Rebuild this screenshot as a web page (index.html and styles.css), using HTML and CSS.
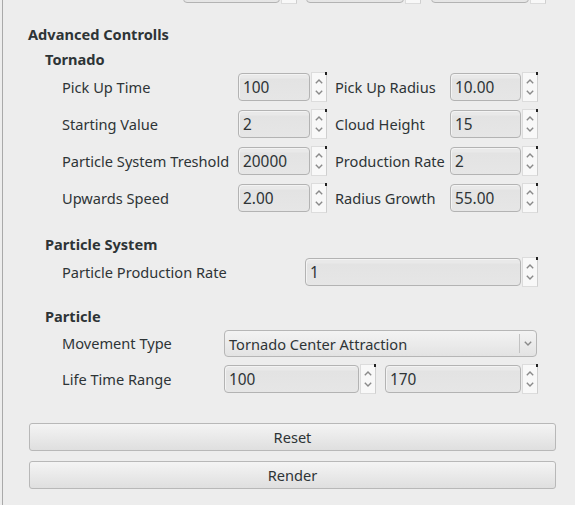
FILE: index.html
```html
<!DOCTYPE html>
<html>
<head>
<meta charset="utf-8">
<link rel="stylesheet" href="styles.css">
</head>
<body>
<div class="panel">
  <div class="toprow">
    <div class="spin w114"><div class="field"></div><div class="btns"><span class="up"></span><span class="dn"></span></div></div>
    <div class="spin w115"><div class="field"></div><div class="btns"><span class="up"></span><span class="dn"></span></div></div>
    <div class="spin w115"><div class="field"></div><div class="btns"><span class="up"></span><span class="dn"></span></div></div>
  </div>

  <div class="h1">Advanced Controlls</div>

  <div class="h2">Tornado</div>
  <div class="tgrid">
    <div class="lbl">Pick Up Time</div>
    <div class="spin"><div class="field">100</div><div class="btns"><svg class="chev" viewBox="0 0 8 5"><polyline points="0.8,4.2 4,1 7.2,4.2"/></svg><svg class="chev" viewBox="0 0 8 5"><polyline points="0.8,0.8 4,4 7.2,0.8"/></svg></div></div>
    <div class="lbl lb2">Pick Up Radius</div>
    <div class="spin"><div class="field">10.00</div><div class="btns"><svg class="chev" viewBox="0 0 8 5"><polyline points="0.8,4.2 4,1 7.2,4.2"/></svg><svg class="chev" viewBox="0 0 8 5"><polyline points="0.8,0.8 4,4 7.2,0.8"/></svg></div></div>

    <div class="lbl">Starting Value</div>
    <div class="spin"><div class="field">2</div><div class="btns"><svg class="chev" viewBox="0 0 8 5"><polyline points="0.8,4.2 4,1 7.2,4.2"/></svg><svg class="chev" viewBox="0 0 8 5"><polyline points="0.8,0.8 4,4 7.2,0.8"/></svg></div></div>
    <div class="lbl lb2">Cloud Height</div>
    <div class="spin"><div class="field">15</div><div class="btns"><svg class="chev" viewBox="0 0 8 5"><polyline points="0.8,4.2 4,1 7.2,4.2"/></svg><svg class="chev" viewBox="0 0 8 5"><polyline points="0.8,0.8 4,4 7.2,0.8"/></svg></div></div>

    <div class="lbl">Particle System Treshold</div>
    <div class="spin"><div class="field">20000</div><div class="btns"><svg class="chev" viewBox="0 0 8 5"><polyline points="0.8,4.2 4,1 7.2,4.2"/></svg><svg class="chev" viewBox="0 0 8 5"><polyline points="0.8,0.8 4,4 7.2,0.8"/></svg></div></div>
    <div class="lbl lb2">Production Rate</div>
    <div class="spin"><div class="field">2</div><div class="btns"><svg class="chev" viewBox="0 0 8 5"><polyline points="0.8,4.2 4,1 7.2,4.2"/></svg><svg class="chev" viewBox="0 0 8 5"><polyline points="0.8,0.8 4,4 7.2,0.8"/></svg></div></div>

    <div class="lbl">Upwards Speed</div>
    <div class="spin"><div class="field">2.00</div><div class="btns"><svg class="chev" viewBox="0 0 8 5"><polyline points="0.8,4.2 4,1 7.2,4.2"/></svg><svg class="chev" viewBox="0 0 8 5"><polyline points="0.8,0.8 4,4 7.2,0.8"/></svg></div></div>
    <div class="lbl lb2">Radius Growth</div>
    <div class="spin"><div class="field">55.00</div><div class="btns"><svg class="chev" viewBox="0 0 8 5"><polyline points="0.8,4.2 4,1 7.2,4.2"/></svg><svg class="chev" viewBox="0 0 8 5"><polyline points="0.8,0.8 4,4 7.2,0.8"/></svg></div></div>
  </div>

  <div class="h2 sec2">Particle System</div>
  <div class="psgrid">
    <div class="lbl">Particle Production Rate</div>
    <div class="spin"><div class="field">1</div><div class="btns"><svg class="chev" viewBox="0 0 8 5"><polyline points="0.8,4.2 4,1 7.2,4.2"/></svg><svg class="chev" viewBox="0 0 8 5"><polyline points="0.8,0.8 4,4 7.2,0.8"/></svg></div></div>
  </div>

  <div class="h2 sec3">Particle</div>
  <div class="pgrid">
    <div class="lbl">Movement Type</div>
    <div class="combo"><span class="ctext">Tornado Center Attraction</span><span class="carrow"><svg class="chev" viewBox="0 0 8 5"><polyline points="0.8,0.8 4,4 7.2,0.8"/></svg></span></div>
    <div class="lbl">Life Time Range</div>
    <div class="range">
      <div class="spin"><div class="field">100</div><div class="btns"><svg class="chev" viewBox="0 0 8 5"><polyline points="0.8,4.2 4,1 7.2,4.2"/></svg><svg class="chev" viewBox="0 0 8 5"><polyline points="0.8,0.8 4,4 7.2,0.8"/></svg></div></div>
      <div class="spin"><div class="field">170</div><div class="btns"><svg class="chev" viewBox="0 0 8 5"><polyline points="0.8,4.2 4,1 7.2,4.2"/></svg><svg class="chev" viewBox="0 0 8 5"><polyline points="0.8,0.8 4,4 7.2,0.8"/></svg></div></div>
    </div>
  </div>

  <div class="buttons">
    <button class="btn">Reset</button>
    <button class="btn">Render</button>
  </div>
</div>
</body>
</html>
```

FILE: styles.css
```css
html, body {
  margin: 0;
  padding: 0;
  background: #ededed;
  overflow: hidden;
}
body {
  font-family: "Noto Sans", "DejaVu Sans", sans-serif;
  font-size: 14.6px;
  color: #2e3436;
}
.panel {
  display: flow-root;
  margin-left: 2px;
  border-left: 1px solid #a9a9a9;
  height: 505px;
  box-sizing: border-box;
  padding-left: 25px;
}
.toprow {
  display: flex;
  margin-top: -25px;
  margin-left: 155px;
  gap: 9px;
}
.toprow .spin.w114 { width: 114px; }
.toprow .spin.w115 { width: 115px; }
.toprow .spin + .spin + .spin { margin-left: 1px; }

.spin {
  display: flex;
  height: 28px;
}
.field {
  flex: 1;
  box-sizing: border-box;
  height: 28px;
  border: 1px solid #b3b3b3;
  border-radius: 4px;
  background: linear-gradient(#e9e9e9 0, #e9e9e9 4px, #e3e3e3 5px, #e6e6e6 100%);
  box-shadow: inset 1px 1px 0 #f3f3f3;
  padding-left: 4px;
  line-height: 28px;
  font-size: 15.4px;
  color: #2e3436;
  overflow: hidden;
}
.btns {
  width: 16px;
  box-sizing: border-box;
  height: 30px;
  margin-top: -1px;
  margin-left: 1px;
  background: #f8f8f8;
  border: 1px solid #dcdcdc;
  border-right-color: #cfcfcf;
  display: flex;
  flex-direction: column;
  align-items: center;
  justify-content: space-around;
  padding: 3px 0;
  position: relative;
}
.btns::after {
  content: "";
  position: absolute;
  right: -1px;
  top: -1px;
  width: 2px;
  height: 3px;
  background: #222;
}
.chev {
  width: 8px;
  height: 5px;
  fill: none;
  stroke: #8a8a8a;
  stroke-width: 1.4;
}

.h1 {
  font-weight: bold;
  margin-top: 21px;
  line-height: 20px;
}
.h2 {
  font-weight: bold;
  margin-left: 17px;
  margin-top: 5px;
  line-height: 20px;
}
.lbl {
  line-height: 28px;
  white-space: nowrap;
}
.tgrid {
  display: grid;
  grid-template-columns: 176px 89px 123px 88px;
  grid-auto-rows: 28px;
  row-gap: 9px;
  margin-left: 34px;
  margin-top: 4px;
}
.lb2 { padding-left: 8px; }

.sec2 { margin-top: 22px; }
.psgrid {
  display: grid;
  grid-template-columns: 243px 233px;
  grid-auto-rows: 28px;
  margin-left: 34px;
  margin-top: 4px;
}
.sec3 { margin-top: 20px; }
.pgrid {
  display: grid;
  grid-template-columns: 162px 314px;
  grid-template-rows: 27px 28px;
  row-gap: 8px;
  margin-left: 34px;
  margin-top: 4px;
}
.pgrid .lbl:first-child { line-height: 27px; }
.combo {
  display: flex;
  align-items: center;
  height: 27px;
  box-sizing: border-box;
  border: 1px solid #b6b6b6;
  border-radius: 4px;
  background: linear-gradient(#f3f3f3, #e3e3e3);
  width: 313px;
}
.ctext {
  flex: 1;
  padding-left: 4px;
}
.carrow {
  width: 16px;
  height: 19px;
  border-left: 1px solid #c2c2c2;
  display: flex;
  align-items: center;
  justify-content: center;
}
.range {
  display: flex;
  gap: 9px;
}
.range .spin:first-child { width: 152px; }
.range .spin:last-child { width: 153px; }

.buttons {
  display: flex;
  flex-direction: column;
  gap: 10px;
  margin-top: 30px;
  margin-left: 1px;
  width: 527px;
}
.btn {
  height: 28px;
  border: 1px solid #b8b8b8;
  border-radius: 3px;
  background: linear-gradient(#f4f4f4, #dfdfdf);
  font-family: "Noto Sans", "DejaVu Sans", sans-serif;
  font-size: 14.6px;
  color: #2e3436;
  padding: 0;
}
```
